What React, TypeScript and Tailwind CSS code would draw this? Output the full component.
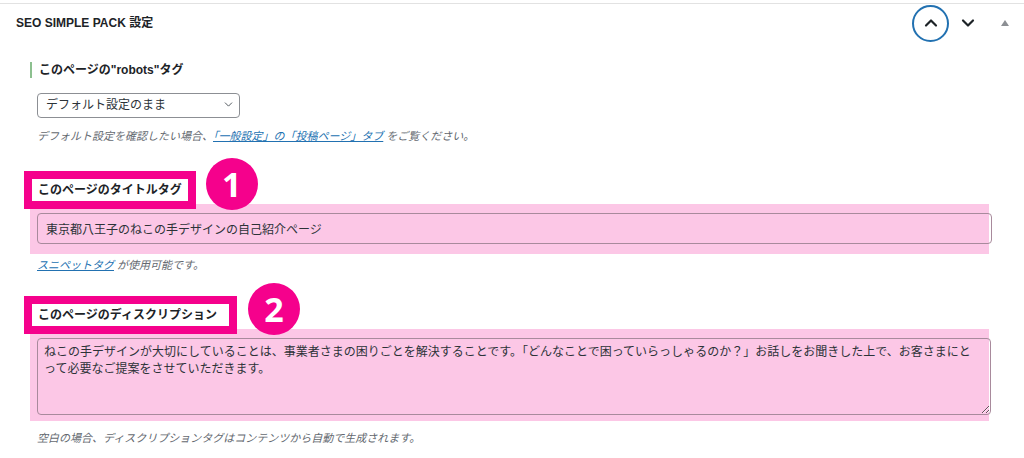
import { ChevronDown, ChevronUp } from 'lucide-react';

const descText =
  'ねこの手デザインが大切にしていることは、事業者さまの困りごとを解決することです。「どんなことで困っていらっしゃるのか？」お話しをお聞きした上で、お客さまにと\nって必要なご提案をさせていただきます。';

function Marker({ n }: { n: number }) {
  return (
    <div className="w-[52px] h-[52px] rounded-full bg-[#f5018c] flex items-center justify-center text-white text-[34px] font-bold font-['Noto_Sans','Liberation_Sans',sans-serif] leading-none">
      {n}
    </div>
  );
}

function BoxedLabel({ children, wide }: { children: React.ReactNode; wide?: boolean }) {
  return (
    <div
      className={`relative z-10 mb-[1px] border-[8px] border-[#f5018c] bg-white pl-[6px] ${
        wide ? 'pr-[12px]' : 'pr-[6px]'
      } text-[12px] leading-[22px] font-bold text-[#1d2327]`}
    >
      {children}
    </div>
  );
}

export default function App() {
  return (
    <div className="w-[1024px] h-[458px] overflow-hidden bg-white pt-[3px] font-['Liberation_Sans','Noto_Sans_CJK_JP',sans-serif] text-[#1d2327]">
      <div className="border-t border-[#e2e2e2]">
        {/* header */}
        <div className="h-[38px] flex items-center justify-between pl-4 pr-[1px]">
          <h2 className="text-[12px] font-bold">SEO SIMPLE PACK 設定</h2>
          <div className="flex items-center">
            <button className="w-[37px] h-[37px] rounded-full border-2 border-[#2271b1] flex items-center justify-center">
              <ChevronUp size={20} strokeWidth={2.6} className="text-[#1d2327]" />
            </button>
            <button className="w-[38px] h-[37px] flex items-center justify-center">
              <ChevronDown size={20} strokeWidth={2.6} className="text-[#1d2327]" />
            </button>
            <button className="w-[36px] h-[37px] flex items-center justify-center">
              <span className="w-0 h-0 border-l-[4px] border-r-[4px] border-b-[6px] border-l-transparent border-r-transparent border-b-[#8c8f94]" />
            </button>
          </div>
        </div>

        <div className="pl-[24px]">
          {/* robots */}
          <div className="ml-[6px] mt-[20px] border-l-2 border-[#8cc08f] pl-[7px] text-[12px] leading-[16px] font-bold">
            このページの"robots"タグ
          </div>
          <div className="relative ml-[13px] mt-[14px] w-[203px]">
            <select className="appearance-none w-full h-[25px] rounded-[4px] border border-[#8c8f94] bg-white pl-[8px] text-[12px] text-[#2c3338] outline-none">
              <option>デフォルト設定のまま</option>
            </select>
            <ChevronDown
              size={13}
              strokeWidth={1.8}
              className="pointer-events-none absolute right-[5px] top-[6px] text-[#50575e]"
            />
          </div>
          <p className="ml-[13px] mt-[10px] text-[11px] leading-[16px] italic text-[#646970]">
            デフォルト設定を確認したい場合、
            <a href="#" className="text-[#2271b1] underline">
              「一般設定」の「投稿ページ」タブ
            </a>{' '}
            をご覧ください。
          </p>

          {/* title tag */}
          <div className="mt-[14px] flex items-end gap-[10px]">
            <BoxedLabel>このページのタイトルタグ</BoxedLabel>
            <Marker n={1} />
          </div>
          <div className="-mt-[6px] ml-[6px] w-[959px] bg-[#fcc7e6] pt-[9px] pb-[10px]">
            <input
              readOnly
              defaultValue="東京都八王子のねこの手デザインの自己紹介ページ"
              className="ml-[7px] block w-[955px] h-[31px] rounded-[4px] border border-[#a88a9c] bg-transparent pl-[8px] text-[12px] text-[#2c3338] outline-none"
            />
          </div>
          <p className="ml-[13px] mt-[3px] text-[11px] leading-[16px] italic text-[#646970]">
            <a href="#" className="text-[#2271b1] underline">
              スニペットタグ
            </a>{' '}
            が使用可能です。
          </p>

          {/* description */}
          <div className="mt-[10px] flex items-end gap-[11px]">
            <BoxedLabel wide>このページのディスクリプション</BoxedLabel>
            <Marker n={2} />
          </div>
          <div className="-mt-[6px] ml-[6px] w-[959px] bg-[#fcc7e6] pt-[9px] pb-[6px]">
            <textarea
              readOnly
              defaultValue={descText}
              className="ml-[7px] block w-[954px] h-[77px] rounded-[4px] border border-[#a88a9c] bg-transparent px-[6px] pt-[5px] text-[12px] leading-[17px] text-[#2c3338] outline-none overflow-hidden"
            />
          </div>
          <p className="ml-[13px] mt-[9px] text-[11px] leading-[16px] italic text-[#646970]">
            空白の場合、ディスクリプションタグはコンテンツから自動で生成されます。
          </p>
        </div>
      </div>
    </div>
  );
}
